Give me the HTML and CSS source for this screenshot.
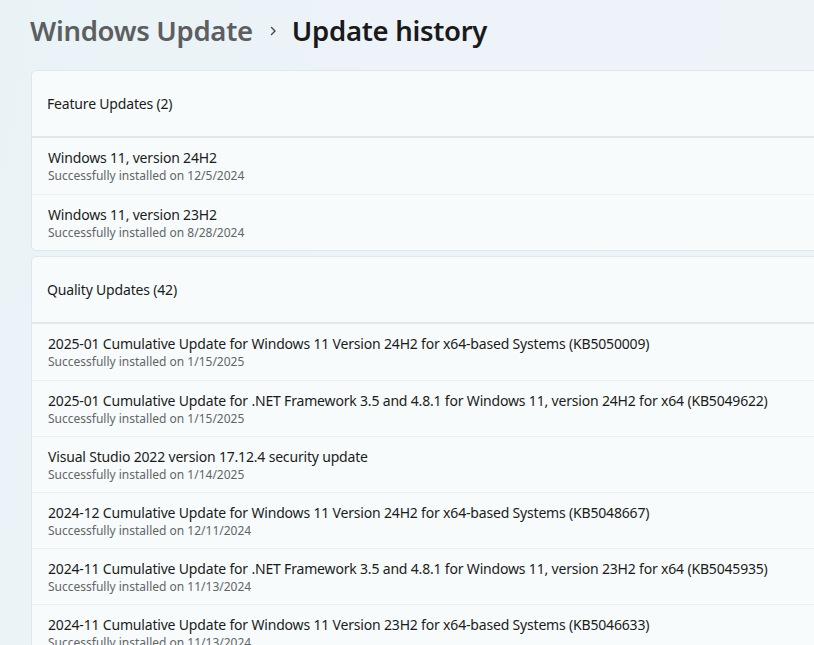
FILE: index.html
```html
<!DOCTYPE html>
<html>
<head>
    <title>Update history</title>
    <link rel="stylesheet" href="styles.css">
</head>
<body>
    <div class="page">
        <h1 class="breadcrumb">
            <span class="crumb-parent">Windows Update</span>
            <svg class="crumb-chevron" width="12" height="12" viewBox="0 0 12 12"><path d="M4.5 2.5 L8 6 L4.5 9.5" fill="none" stroke="#444" stroke-width="1.4" stroke-linecap="round" stroke-linejoin="round"/></svg>
            <span class="crumb-current">Update history</span>
        </h1>

        <div class="card">
            <div class="card-header">Feature Updates (2)</div>
            <div class="row">
                <div class="row-title">Windows 11, version 24H2</div>
                <div class="row-sub">Successfully installed on 12/5/2024</div>
            </div>
            <div class="row">
                <div class="row-title">Windows 11, version 23H2</div>
                <div class="row-sub">Successfully installed on 8/28/2024</div>
            </div>
        </div>

        <div class="card">
            <div class="card-header">Quality Updates (42)</div>
            <div class="row">
                <div class="row-title">2025-01 Cumulative Update for Windows 11 Version 24H2 for x64-based Systems (KB5050009)</div>
                <div class="row-sub">Successfully installed on 1/15/2025</div>
            </div>
            <div class="row">
                <div class="row-title">2025-01 Cumulative Update for .NET Framework 3.5 and 4.8.1 for Windows 11, version 24H2 for x64 (KB5049622)</div>
                <div class="row-sub">Successfully installed on 1/15/2025</div>
            </div>
            <div class="row">
                <div class="row-title">Visual Studio 2022 version 17.12.4 security update</div>
                <div class="row-sub">Successfully installed on 1/14/2025</div>
            </div>
            <div class="row">
                <div class="row-title">2024-12 Cumulative Update for Windows 11 Version 24H2 for x64-based Systems (KB5048667)</div>
                <div class="row-sub">Successfully installed on 12/11/2024</div>
            </div>
            <div class="row">
                <div class="row-title">2024-11 Cumulative Update for .NET Framework 3.5 and 4.8.1 for Windows 11, version 23H2 for x64 (KB5045935)</div>
                <div class="row-sub">Successfully installed on 11/13/2024</div>
            </div>
            <div class="row">
                <div class="row-title">2024-11 Cumulative Update for Windows 11 Version 23H2 for x64-based Systems (KB5046633)</div>
                <div class="row-sub">Successfully installed on 11/13/2024</div>
            </div>
        </div>
    </div>
</body>
</html>
```

FILE: styles.css
```css
html, body {
    height: 100%;
}
body {
    margin: 0;
    overflow: hidden;
    font-family: "Noto Sans", "Open Sans", sans-serif;
    background: linear-gradient(100deg, #e9f3f6 0%, #edf3f8 40%, #eef3f8 100%);
    color: #1b1b1b;
}
.page {
    padding: 10px 0 0 30px;
}
.breadcrumb {
    display: flex;
    align-items: center;
    margin: 0 0 20px 0;
    height: 40px;
    font-size: 27.5px;
    font-weight: 600;
    letter-spacing: -0.3px;
}
.crumb-parent {
    color: #5c5e60;
}
.crumb-chevron {
    margin: 2px 13px 0 14px;
}
.crumb-current {
    color: #1a1a1a;
}
.card {
    width: 820px;
    margin: 0 0 5px 1px;
    background: #f8fbfc;
    border: 1px solid #e0e7eb;
    border-radius: 5px;
    letter-spacing: -0.18px;
}
.card-header {
    height: 65px;
    display: flex;
    align-items: center;
    padding-left: 15px;
    font-size: 14px;
    border-bottom: 2px solid #e0e6ea;
}
.row {
    height: 55px;
    display: flex;
    flex-direction: column;
    justify-content: center;
    padding: 0 16px;
    border-top: 1px solid #e9f0f2;
}
.card-header + .row {
    border-top: none;
    height: 56px;
}
.row-title {
    font-size: 14px;
    line-height: 20px;
    white-space: nowrap;
}
.row-sub {
    font-size: 12px;
    line-height: 16px;
    color: #616568;
    letter-spacing: 0;
}
```
